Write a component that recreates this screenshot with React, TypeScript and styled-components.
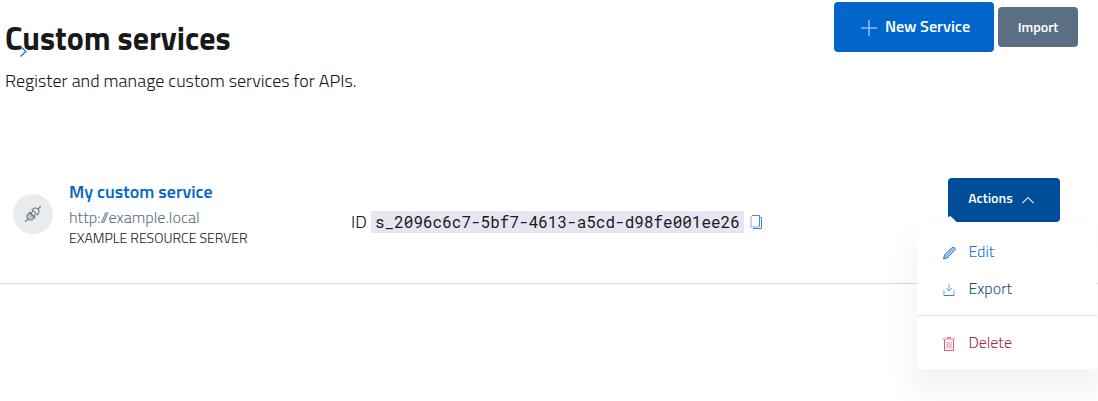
import React from "react";
import styled, { createGlobalStyle } from "styled-components";

const GlobalStyle = createGlobalStyle`
  * { box-sizing: border-box; }
  body {
    margin: 0;
    background: #fff;
    color: #19191a;
    font-family: "Titillium Web", Roboto, "Open Sans", sans-serif;
    font-weight: 300;
    overflow: hidden;
  }
`;

const Page = styled.main`
  height: 401px;
  overflow: hidden;
`;

const Header = styled.header`
  display: flex;
  justify-content: space-between;
  height: 160px;
  padding: 2px 20px 0 5px;
`;

const Heading = styled.div`
  position: relative;
  padding-top: 16px;
`;

const Title = styled.h1`
  margin: 0;
  font-size: 32px;
  line-height: 40px;
  font-weight: 700;
  white-space: nowrap;
`;

const Crumb = styled.svg`
  position: absolute;
  left: 14px;
  top: 43px;
`;

const Lead = styled.p`
  margin: 10px 0 0;
  font-size: 18px;
  line-height: 26px;
  white-space: nowrap;
`;

const Toolbar = styled.div`
  display: flex;
  align-items: center;
  gap: 4px;
  height: 50px;
`;

const paddings = { sm: "0 0 2px", md: "0 5px 5px 0", lg: "0 0 3px 3px" };

const Button = styled.button<{ $tone: string; $size: "sm" | "md" | "lg" }>`
  display: flex;
  align-items: center;
  justify-content: center;
  gap: 8px;
  width: ${(p) => ({ sm: 80, md: 112, lg: 160 })[p.$size]}px;
  height: ${(p) => ({ sm: 40, md: 44, lg: 50 })[p.$size]}px;
  padding: ${(p) => paddings[p.$size]};
  border: 0;
  border-radius: 4px;
  background: ${(p) => p.$tone};
  color: #fff;
  font-family: inherit;
  font-size: ${(p) => (p.$size === "lg" ? 16.2 : 14)}px;
  font-weight: 600;
  white-space: nowrap;

  svg { margin-top: ${(p) => (p.$size === "md" ? 4 : 5)}px; }
`;

const Row = styled.section`
  display: flex;
  height: 124px;
  padding: 18px 38px 0 13px;
  border-bottom: 1px solid #d5d8dc;
`;

const Avatar = styled.div`
  display: grid;
  place-items: center;
  width: 40px;
  height: 40px;
  margin-top: 16px;
  border-radius: 50%;
  background: #e9ebec;
`;

const Info = styled.div`
  display: flex;
  flex-direction: column;
  width: 282px;
  margin-left: 16px;
  white-space: nowrap;
`;

const ServiceName = styled.a`
  color: #0066cc;
  font-size: 18px;
  line-height: 28px;
  font-weight: 600;
`;

const ServiceUrl = styled.span`
  color: #5b6f82;
  font-size: 16.2px;
  line-height: 22px;
`;

const ServiceKind = styled.span`
  font-size: 14px;
  line-height: 20px;
`;

const Identifier = styled.div`
  display: flex;
  align-items: center;
  height: 24px;
  margin-top: 32px;
  font-size: 16px;
`;

const IdLabel = styled.span`
  width: 20px;
  padding-bottom: 2px;
  font-size: 18px;
`;

const Code = styled.code`
  height: 22px;
  margin-right: 6px;
  padding: 0 4px;
  background: #e8e4f2;
  font-family: "Roboto Mono", "Liberation Mono", monospace;
  font-size: 16px;
  line-height: 22px;
  font-weight: 400;
`;

const Actions = styled.div`
  position: relative;
  margin-left: auto;
`;

const Menu = styled.div`
  position: absolute;
  top: 44px;
  left: -31px;
  width: 180px;
  height: 147px;
  padding-top: 11px;
  border-radius: 4px;
  background: #fff;
  box-shadow: 0 20px 30px 5px rgba(0, 0, 0, 0.05);

  &::before {
    content: "";
    position: absolute;
    top: -3px;
    left: 24px;
    width: 18px;
    height: 18px;
    border-radius: 3px;
    background: #fff;
    transform: rotate(45deg);
  }
`;

const MenuItem = styled.a<{ $color: string }>`
  position: relative;
  display: flex;
  align-items: center;
  gap: 12.4px;
  height: 37px;
  padding: 0 0 2px 25px;
  color: ${(p) => p.$color};
  font-size: 16px;

  svg { margin-top: 4px; }
`;

const Divider = styled.hr`
  height: 1px;
  margin: 8px 0;
  border: 0;
  background: #e6e8eb;
`;

const Drawing = styled.svg`
  flex: none;
  overflow: visible;
`;

function Glyph({ children, size = 14, color, width = 1 }: { children: React.ReactNode; size?: number; color: string; width?: number }) {
  return (
    <Drawing width={size} height={size} viewBox={`0 0 ${size} ${size}`} fill="none" stroke={color} strokeWidth={width}>
      {children}
    </Drawing>
  );
}

export default function App() {
  return (
    <>
      <GlobalStyle />
      <Page>
        <Header>
          <Heading>
            <Title>Custom services</Title>
            <Crumb width="9" height="12" viewBox="0 0 9 12" fill="none" stroke="#0a73e0" strokeWidth="1.2">
              <path d="M1.500 1.500 6.800 6.500 1.500 11.500" />
            </Crumb>
            <Lead>Register and manage custom services for APIs.</Lead>
          </Heading>
          <Toolbar>
            <Button $tone="#0066cc" $size="lg">
              <Glyph size={16} color="#8dbbe9" width={1.6}>
                <path d="M8 0v16M0 8h16" />
              </Glyph>
              New Service
            </Button>
            <Button $tone="#5b6f82" $size="sm">Import</Button>
          </Toolbar>
        </Header>
        <Row>
          <Avatar>
            <Glyph size={18} color="#667b8e">
              <g transform="rotate(-45 9 9)">
                <path d="M-2 9h4M16 9h4" strokeWidth="1.2" />
                <path d="M7.500 5.500H5Q2 6 2 9t3 3.500h2.500z" fill="#5b6f82" fillOpacity=".3" />
                <path d="M8 4.500v9" />
                <path d="M8 7h3M8 11h3" />
                <path d="M11.500 4.500v9M11.500 5.500h1.500Q16 6 16 9t-3 3.500h-1.500" />
              </g>
            </Glyph>
          </Avatar>
          <Info>
            <ServiceName>My custom service</ServiceName>
            <ServiceUrl>http://example.local</ServiceUrl>
            <ServiceKind>EXAMPLE RESOURCE SERVER</ServiceKind>
          </Info>
          <Identifier>
            <IdLabel>ID</IdLabel>
            <Code>s_2096c6c7-5bf7-4613-a5cd-d98fe001ee26</Code>
            <Glyph color="#3c8ade">
              <path d="M2 .5h7.500v11" />
              <path d="M9.500 2.500h2v11H3" />
              <path d="M1 1v11h8.500" strokeWidth="2" strokeOpacity=".35" />
            </Glyph>
          </Identifier>
          <Actions>
            <Button $tone="#004d99" $size="md">
              Actions
              <Glyph color="#d0dfee" width={1.1}>
                <path d="M1.500 10 7 4.500 12.500 10" />
              </Glyph>
            </Button>
            <Menu>
              <MenuItem $color="#1a75d1">
                <Glyph color="#2878cc">
                  <path d="M1.500 13l1-4 7-7Q11.500.5 12.700 1.800T12.500 4.500L5 12z" fill="#2878cc" fillOpacity=".35" />
                  <path d="M4 10l7-7M2.500 9.500l2 2" strokeOpacity=".6" />
                </Glyph>
                Edit
              </MenuItem>
              <MenuItem $color="#17508a">
                <Glyph color="#2f83db">
                  <path d="M2 12.500h10" />
                  <path d="M2 7v6M12 7v6" strokeOpacity=".35" strokeWidth="2" />
                  <path d="M7 1v7" strokeOpacity=".35" strokeWidth="2" />
                  <path d="M4 5 7 8l3-3" strokeOpacity=".7" />
                </Glyph>
                Export
              </MenuItem>
              <Divider />
              <MenuItem $color="#a32c43">
                <Glyph color="#d95c76">
                  <path d="M5 .5h4M2.500 3v10.500h9V3" />
                  <path d="M1 2h12" strokeOpacity=".45" strokeWidth="2" />
                  <path d="M5 4.500v7M9 4.500v7" strokeOpacity=".7" />
                  <path d="M7 4.500v7" strokeOpacity=".35" strokeWidth="2" />
                </Glyph>
                Delete
              </MenuItem>
            </Menu>
          </Actions>
        </Row>
      </Page>
    </>
  );
}
